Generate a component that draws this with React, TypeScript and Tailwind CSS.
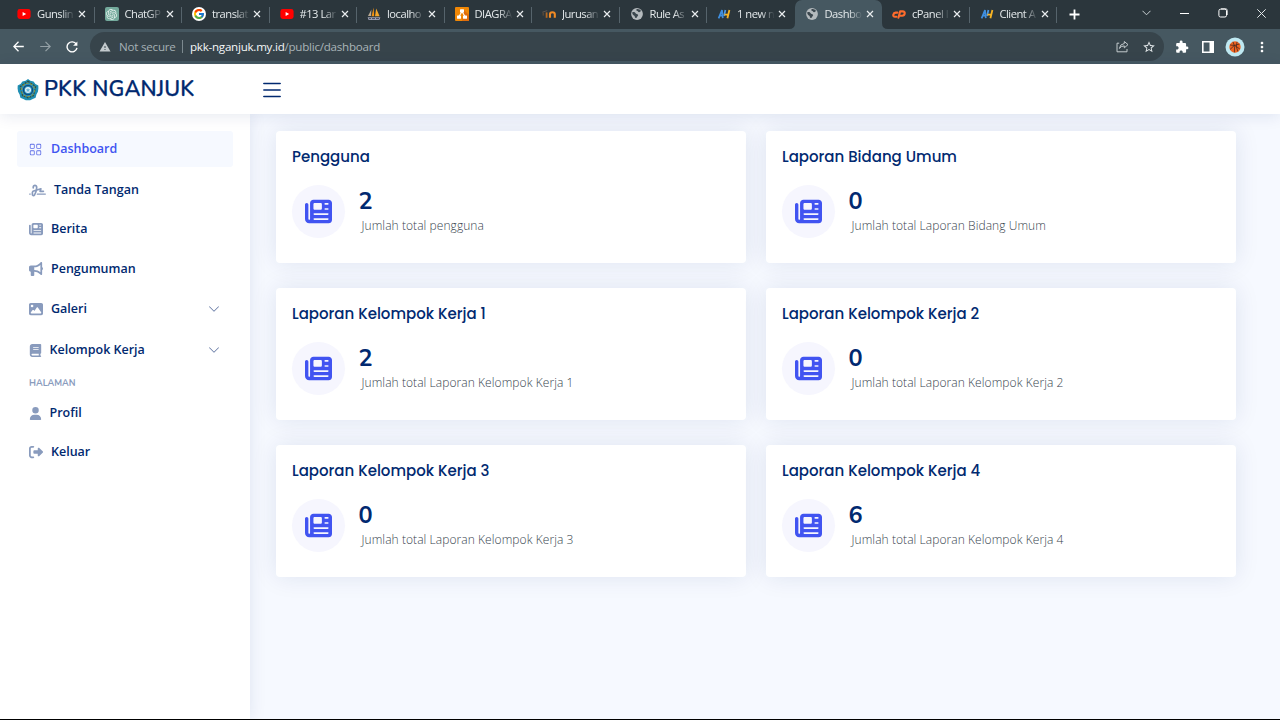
import React from "react";
import { BsChevronDown, BsGrid, BsList } from "react-icons/bs";
import {
  FaBook,
  FaBullhorn,
  FaImage,
  FaNewspaper,
  FaRightFromBracket,
  FaSignature,
  FaUser,
} from "react-icons/fa6";
import { FcGoogle } from "react-icons/fc";
import { MdExtension, MdMoreVert, MdStarOutline, MdWarning } from "react-icons/md";
import { SiOpenai } from "react-icons/si";

function YoutubeIcon() {
  return (
    <svg width="14" height="14" viewBox="0 0 14 14">
      <rect x="0.4" y="2" width="13.2" height="10" rx="2.4" fill="#ff0000" />
      <path d="M5.6 4.9v4.2L9.2 7z" fill="#fff" />
    </svg>
  );
}

function ChatIcon() {
  return (
    <span className="flex h-3.5 w-3.5 items-center justify-center rounded-[2px] bg-[#74aa9c] text-[#e6f1ee]">
      <SiOpenai size={11} />
    </span>
  );
}

function GoogleIcon() {
  return (
    <span className="flex h-3.5 w-3.5 items-center justify-center rounded-full bg-white">
      <FcGoogle size={12} />
    </span>
  );
}

function SailIcon() {
  return (
    <svg width="14" height="14" viewBox="0 0 14 14">
      <path d="M4.4 2.6 1 9h3z" fill="#b9a890" />
      <path d="M6.6.6 4.6 9.2h2.6z" fill="#f29111" />
      <path d="M9.2 1.4 8 9.2h4.6z" fill="#f2a52b" />
      <path d="M.6 10.2h12.8L12.4 13H1.6z" fill="#9da1b5" />
      <path d="M2 11.6h2m1 0h3m1 0h3" stroke="#2d3246" strokeWidth=".8" />
    </svg>
  );
}

function DiagramIcon() {
  return (
    <svg width="14" height="14" viewBox="0 0 14 14">
      <rect width="14" height="14" rx="1" fill="#f08705" />
      <path d="M7 14h7V8L9 3z" fill="#df6c0c" />
      <path d="M7 4.5 4 9.5M7 4.5l3 5" stroke="#fff" strokeWidth="1.1" />
      <rect x="5" y="2.3" width="4" height="3.2" rx=".5" fill="#fff" />
      <rect x="2" y="8.5" width="4" height="3.2" rx=".5" fill="#fff" />
      <rect x="8" y="8.5" width="4" height="3.2" rx=".5" fill="#fff" />
    </svg>
  );
}

function MoodleIcon() {
  return (
    <svg width="14" height="14" viewBox="0 0 14 14" fill="none">
      <path d="M.3 5.2 5.2 3.6" stroke="#5b5550" strokeWidth="1" />
      <path d="M1.2 8.6V5.6" stroke="#6b5238" strokeWidth="1" />
      <path d="M4.6 10.8V5.4" stroke="#b56a22" strokeWidth="1.8" />
      <path d="M8 10.8V7.2q0-2 2.4-2t2.4 2v3.6" stroke="#f08a24" strokeWidth="2.1" />
    </svg>
  );
}

function GlobeIcon() {
  return (
    <svg width="14" height="14" viewBox="0 0 14 14">
      <circle cx="7" cy="7" r="5.9" fill="#b4babd" />
      <path d="M2.3 5.2c1.5-.4 2.8-.1 3.3 1 .4.9 1.9.6 2.4 1.5.6 1.2-1 1.6-1.1 2.5-.1.7-.8 1-1.5.6-.8-.5-.3-1.5-1.1-2.1C3.2 8 2.1 7.4 2.3 5.2" fill="#3b474e" />
      <path d="M6.6 2.2c1.4-.5 3.7.2 4.5 1.9-.8.3-1.1 1.3-2.1 1.2-1-.1-.7-1.2-1.6-1.3-1-.1-1.6-1.2-.8-1.8" fill="#3b474e" />
    </svg>
  );
}

function HostIcon() {
  return (
    <svg width="14" height="14" viewBox="0 0 14 14" fill="none">
      <path d="M1.6 11.4 5 3.2l.8 8M2.6 8.6h3.6" stroke="#3f8fe0" strokeWidth="1.7" />
      <path d="M8.4 3 7 9" stroke="#4b9bea" strokeWidth="1.7" />
      <path d="m12.4 3-2 8.2M7.4 7.6h3.6" stroke="#f5b324" strokeWidth="1.8" />
    </svg>
  );
}

function PanelIcon() {
  return (
    <svg
      width="14"
      height="14"
      viewBox="0 0 14 14"
      fill="none"
      stroke="#ff6c2c"
      strokeWidth="2.1"
      strokeLinecap="round"
      strokeLinejoin="round"
    >
      <path d="M5.4 5.6H3.7q-2 .2-2.4 2.1T3 9.8h1.4" />
      <path d="m6.4 10.8 1.7-6.4h2.6q2.3.1 2 2.1t-2.6 2.2H8.6" />
    </svg>
  );
}

const TABS = [
  { icon: YoutubeIcon, title: "Gunslin" },
  { icon: ChatIcon, title: "ChatGP" },
  { icon: GoogleIcon, title: "translat" },
  { icon: YoutubeIcon, title: "#13 Lar" },
  { icon: SailIcon, title: "localho" },
  { icon: DiagramIcon, title: "DIAGRA" },
  { icon: MoodleIcon, title: "Jurusan" },
  { icon: GlobeIcon, title: "Rule As" },
  { icon: HostIcon, title: "1 new n" },
  { icon: GlobeIcon, title: "Dashbo", active: true },
  { icon: PanelIcon, title: "cPanel I" },
  { icon: HostIcon, title: "Client A" },
];

function CloseMark() {
  return (
    <svg width="8" height="8" viewBox="0 0 8 8" stroke="#e9edef" strokeWidth="1.2">
      <path d="m1 1 6 6M7 1 1 7" />
    </svg>
  );
}

function TabStrip() {
  return (
    <div className="flex h-[29px] bg-[#2b363c] pl-[7px] text-[#e4e9eb]">
      {TABS.map((tab, i) => {
        const Icon = tab.icon;
        const divided = i !== 8 && i !== 9;
        return (
          <div
            key={i}
            className={
              tab.active
                ? "relative flex w-[87.5px] items-center rounded-t-[7px] bg-[#465861] pb-[1px] pl-[10px]"
                : "relative flex w-[87.5px] items-center pb-[1px] pl-[10px]"
            }
          >
            {tab.active && (
              <>
                <svg className="absolute bottom-0 -left-[6px]" width="6" height="6">
                  <path d="M6 0v6H0q6 0 6-6" fill="#465861" />
                </svg>
                <svg className="absolute -right-[6px] bottom-0" width="6" height="6">
                  <path d="M0 0v6h6Q0 6 0 0" fill="#465861" />
                </svg>
              </>
            )}
            <span className="flex w-3.5 shrink-0 justify-center">
              <Icon />
            </span>
            <span className="ml-[6px] w-[41px] shrink-0 text-[11.2px] leading-4 tracking-[-0.5px] whitespace-nowrap [mask-image:linear-gradient(to_right,black_58%,transparent_92%)]">
              {tab.title}
            </span>
            <CloseMark />
            {divided && <span className="absolute top-[7px] right-0 h-4 w-px bg-[#56646c]" />}
          </div>
        );
      })}
      <div className="flex flex-1 items-center justify-between pr-[14px] pl-[12px]">
        <svg width="11" height="11" viewBox="0 0 11 11" stroke="#fff" strokeWidth="1.8">
          <path d="M5.5.5v10M.5 5.5h10" />
        </svg>
        <div className="flex items-center gap-[29px] pb-[3px]">
          <svg width="9" height="6" viewBox="0 0 9 6" fill="none" stroke="#c9d0d3">
            <path d="m.5.8 4 4 4-4" />
          </svg>
          <svg width="9" height="9" viewBox="0 0 9 9" stroke="#fff">
            <path d="M0 4.5h9" />
          </svg>
          <svg width="10" height="10" viewBox="0 0 10 10" fill="none" stroke="#fff">
            <rect x=".9" y="1.2" width="7.6" height="7.8" rx="1.6" />
            <path d="M3 .6h4.4q2 0 2 2V7" strokeWidth=".7" />
          </svg>
          <svg width="9" height="9" viewBox="0 0 9 9" stroke="#e3e8ea">
            <path d="m.3.3 8.4 8.4M8.7.3.3 8.7" />
          </svg>
        </div>
      </div>
    </div>
  );
}

function Toolbar() {
  return (
    <div className="flex h-[35px] items-center bg-[#465861] pl-[13px]">
      <svg width="11" height="11" viewBox="0 0 11 11" fill="none" stroke="#fff" strokeWidth="1.3">
        <path d="M10.8 5.5H.9M5.5.8.8 5.5l4.7 4.7" />
      </svg>
      <svg
        className="ml-[16px]"
        width="11"
        height="11"
        viewBox="0 0 11 11"
        fill="none"
        stroke="#94a0a6"
        strokeWidth="1.2"
      >
        <path d="M.2 5.5h9.9M5.5.8l4.7 4.7-4.7 4.7" />
      </svg>
      <svg
        className="ml-[15px]"
        width="12"
        height="12"
        viewBox="0 0 12 12"
        fill="none"
        stroke="#fff"
        strokeWidth="1.4"
      >
        <path d="M10.3 3.2A5 5 0 1 0 11 6.8" />
        <path d="M11.4.4v4.3H7.1z" fill="#fff" stroke="none" />
      </svg>
      <div className="ml-[12px] flex h-[29px] w-[1074px] items-center rounded-full bg-[#37444b] pr-[8px] pl-[9px]">
        <MdWarning size={12} color="#c3cacd" />
        <span className="ml-[8px] w-[56px] text-[11.6px] tracking-[-0.22px] whitespace-nowrap text-[#a5b0b5]">
          Not secure
        </span>
        <span className="ml-[7px] h-[13px] w-px bg-[#7c898f]" />
        <span className="ml-[7px] flex-1 text-[11.6px] tracking-[-0.25px] whitespace-nowrap text-[#a9b4b8]">
          <span className="text-[#f5f7f8]">pkk-nganjuk.my.id</span>/public/dashboard
        </span>
        <svg width="13" height="13" viewBox="0 0 13 13" fill="none" stroke="#c3cacd">
          <path d="M3.2 3.2H1v8.6h10V9" />
          <path d="M8.3 1.5v2Q4 4 3.4 8.4q1.6-2.5 4.9-2.5v2l3.7-3.3z" />
        </svg>
        <MdStarOutline className="ml-[13px]" size={14} color="#e2e7e9" />
      </div>
      <MdExtension className="ml-[11px]" size={14} color="#fff" />
      <svg className="ml-[13px]" width="12" height="12" viewBox="0 0 12 12">
        <path d="M.8.8h10.4v10.4H.8z" fill="none" stroke="#fff" strokeWidth="1.6" />
        <path d="M7.5 0H12v12H7.5z" fill="#fff" />
      </svg>
      <svg className="ml-[11px]" width="20" height="20" viewBox="0 0 20 20">
        <circle cx="10" cy="10" r="9.5" fill="#bfe9f2" />
        <circle cx="10" cy="10" r="5.7" fill="#ee6321" />
        <path
          d="M5 8q5-1 9.8 4M8 4.8q2.5 4 1.4 10.6M5 12.5Q9 7 14.6 7M12 4.8q-1.8 5 .9 9.7"
          fill="none"
          stroke="#4a2c20"
          strokeWidth=".8"
        />
      </svg>
      <MdMoreVert className="ml-[9px]" size={16} color="#fff" />
    </div>
  );
}

function Emblem() {
  return (
    <svg width="22" height="22" viewBox="0 0 22 22">
      <path
        d="m11 0 2.4 1.8 3.2.8 1.8 2.400 2.900 1.600.1 3-.5 3.200-1.500 2.700-.8 3.200-2.900 1.300-2.500 1.300H8.800l-2.500-1.300-2.900-1.300-.8-3.200-1.500-2.700L.6 9.600l.1-3L3.600 5l1.800-2.400 3.200-.8z"
        fill="#1f8fb4"
      />
      <path
        d="m11 2.200 7.600 5.400-2.200 9.200-5.400 1.900-5.400-1.900-2.200-9.200z"
        fill="none"
        stroke="#35503f"
        strokeWidth="1.3"
        strokeDasharray="2 1"
      />
      <circle cx="11" cy="11" r="6.500" fill="#2693c4" stroke="#8f9440" strokeWidth="1.1" strokeDasharray="2.5 1.5" />
      <circle cx="11" cy="11" r="4.600" fill="none" stroke="#144b78" strokeWidth="1.2" />
      <circle cx="11" cy="11" r="3" fill="#e4f2f7" />
      <path d="m11 9 .7 1.300 1.500.2-1.100 1 .3 1.500-1.400-.7-1.400.7.3-1.500-1.100-1 1.500-.2z" fill="#6ab5d4" />
    </svg>
  );
}

function Header() {
  return (
    <header className="relative z-20 flex h-[50px] items-center bg-white pl-[17px] shadow-[0_2px_16px_rgba(1,41,112,0.1)]">
      <div className="flex w-[242px] items-center pt-[1px]">
        <Emblem />
        <span className="ml-[5px] pb-[1px] font-['Nunito','Open_Sans',sans-serif] text-[21.7px] leading-[26px] font-semibold tracking-[0.15px] whitespace-nowrap text-[#012970] [-webkit-text-stroke:0.25px_#012970]">
          PKK NGANJUK
        </span>
      </div>
      <BsList className="mt-[1px]" size={26} color="#012970" />
    </header>
  );
}

interface NavItemProps {
  icon: React.ReactNode;
  label: string;
  gap: string;
  height: string;
  active?: boolean;
  expandable?: boolean;
}

function NavItem({ icon, label, gap, height, active, expandable }: NavItemProps) {
  return (
    <a
      className={`flex items-center rounded-[3px] pr-[13px] pl-[12px] text-[12.5px] font-semibold whitespace-nowrap ${height} ${
        active ? "bg-[#f6f9ff] text-[#4154f1]" : "text-[#012970]"
      }`}
    >
      <span className={active ? "text-[#5f6fe8]" : "text-[#899bbd]"}>{icon}</span>
      <span className={gap}>{label}</span>
      {expandable && <BsChevronDown className="ml-auto" size={12} color="#5c719f" />}
    </a>
  );
}

function Sidebar() {
  return (
    <aside className="relative z-10 w-[250px] bg-white px-[17px] pt-[17px] shadow-[0_0_16px_rgba(1,41,112,0.1)]">
      <NavItem icon={<BsGrid size={13} />} label="Dashboard" gap="ml-[9px]" height="h-9" active />
      <NavItem icon={<FaSignature size={17} />} label="Tanda Tangan" gap="ml-[8px]" height="mt-[5px] h-9" />
      <NavItem icon={<FaNewspaper size={14} />} label="Berita" gap="ml-[8px]" height="mt-[3px] h-9" />
      <NavItem icon={<FaBullhorn size={14} />} label="Pengumuman" gap="ml-[8px]" height="mt-[4px] h-9" />
      <NavItem icon={<FaImage size={14} />} label="Galeri" gap="ml-[8px]" height="mt-[4px] h-9" expandable />
      <NavItem icon={<FaBook size={13} />} label="Kelompok Kerja" gap="ml-[7.5px]" height="mt-[5px] h-9" expandable />
      <div className="mt-[8px] ml-[12px] h-[14px] font-['Nunito','Open_Sans',sans-serif] text-[9px] leading-[14px] font-bold text-[#899bbd]">
        HALAMAN
      </div>
      <NavItem icon={<FaUser size={13} />} label="Profil" gap="ml-[7.5px]" height="mt-[5px] h-9" />
      <NavItem icon={<FaRightFromBracket size={14} />} label="Keluar" gap="ml-[8px]" height="mt-[3px] h-9" />
    </aside>
  );
}

const CARDS = [
  { title: "Pengguna", value: 2, note: "Jumlah total pengguna" },
  { title: "Laporan Bidang Umum", value: 0, note: "Jumlah total Laporan Bidang Umum" },
  { title: "Laporan Kelompok Kerja 1", value: 2, note: "Jumlah total Laporan Kelompok Kerja 1" },
  { title: "Laporan Kelompok Kerja 2", value: 0, note: "Jumlah total Laporan Kelompok Kerja 2" },
  { title: "Laporan Kelompok Kerja 3", value: 0, note: "Jumlah total Laporan Kelompok Kerja 3" },
  { title: "Laporan Kelompok Kerja 4", value: 6, note: "Jumlah total Laporan Kelompok Kerja 4" },
];

function Card({ title, value, note }: { title: string; value: number; note: string }) {
  return (
    <article className="h-[132px] rounded-[4px] bg-white pt-[16px] pl-[16.5px] shadow-[0_0_25px_rgba(1,41,112,0.1)]">
      <h5 className="h-[20px] font-['Poppins','Inter',sans-serif] text-[15px] leading-[20px] font-medium whitespace-nowrap text-[#012970]">
        {title}
      </h5>
      <div className="mt-[17.5px] flex">
        <span className="flex h-[53px] w-[53px] items-center justify-center rounded-full bg-[#f6f6fe]">
          <FaNewspaper size={27} color="#4154f1" />
        </span>
        <div className="pl-[13.5px]">
          <div className="h-[30.5px] font-['Nunito','Open_Sans',sans-serif] text-[23.5px] leading-[33px] font-bold text-[#012970]">
            {value}
          </div>
          <div className="ml-[3px] text-[12px] leading-[22px] font-light tracking-[0.07px] whitespace-nowrap text-[#38444e]">
            {note}
          </div>
        </div>
      </div>
    </article>
  );
}

export default function App() {
  return (
    <div className="flex h-[720px] w-[1280px] flex-col overflow-hidden border-b border-black bg-[#f6f9ff] font-['Open_Sans','Noto_Sans',sans-serif]">
      <TabStrip />
      <Toolbar />
      <Header />
      <div className="flex min-h-0 flex-1">
        <Sidebar />
        <main className="flex-1 pt-[17px] pr-[44.5px] pl-[25.5px]">
          <div className="grid grid-cols-2 gap-x-[20px] gap-y-[25px]">
            {CARDS.map((card) => (
              <Card key={card.title} {...card} />
            ))}
          </div>
        </main>
      </div>
    </div>
  );
}
